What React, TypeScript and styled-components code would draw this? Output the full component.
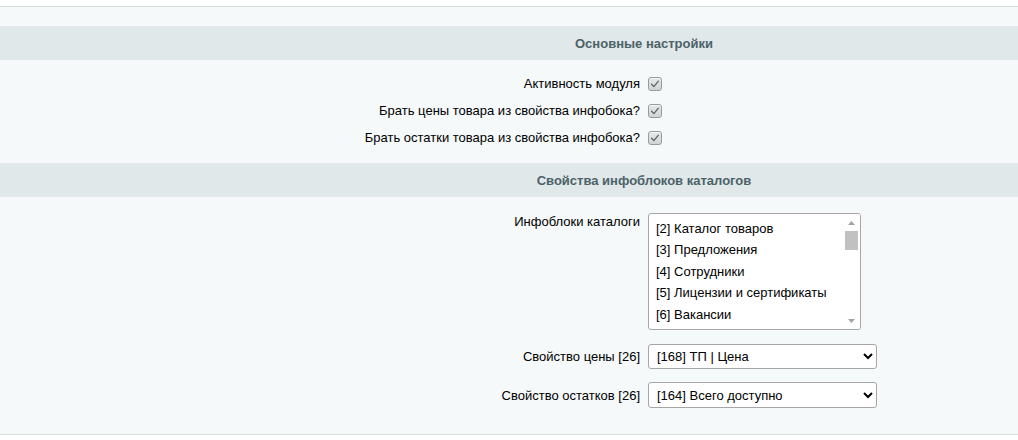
import React from "react";
import styled, { createGlobalStyle } from "styled-components";

const GlobalStyle = createGlobalStyle`
  html, body {
    margin: 0;
    padding: 0;
    background: #ffffff;
    overflow: hidden;
  }
  body {
    font-family: "Liberation Sans", Arial, Helvetica, sans-serif;
    font-size: 13px;
    color: #000000;
  }
`;

const Page = styled.div`
  width: 100%;
  padding-top: 6px;
  background: #ffffff;
`;

const Panel = styled.div`
  background: #f5f9f9;
  border-top: 1px solid #d7dcdd;
  border-bottom: 1px solid #d7dcdd;
  padding-top: 19px;
  padding-bottom: 26px;
`;

const Heading = styled.div`
  height: 34px;
  padding-left: 270px;
  background: #e0e8ea;
  color: #4b6267;
  font-weight: bold;
  font-size: 13px;
  display: flex;
  align-items: center;
  justify-content: center;
`;

const Body = styled.div<{ $top: number; $bottom: number; $gap: number }>`
  display: flex;
  flex-direction: column;
  padding-top: ${(p) => p.$top}px;
  padding-bottom: ${(p) => p.$bottom}px;
  gap: ${(p) => p.$gap}px;
`;

const Row = styled.div<{ $h?: number; $top?: boolean; $mt?: number }>`
  display: grid;
  grid-template-columns: 648px 1fr;
  align-items: ${(p) => (p.$top ? "start" : "center")};
  ${(p) => (p.$h ? `height: ${p.$h}px;` : "")}
  ${(p) => (p.$mt ? `margin-top: ${p.$mt}px;` : "")}
`;

const Label = styled.label<{ $pt?: number }>`
  text-align: right;
  padding-right: 8px;
  padding-top: ${(p) => p.$pt ?? 0}px;
  color: #000;
  font-size: 13px;
  white-space: nowrap;
`;

const Field = styled.div`
  display: flex;
  align-items: center;
`;

const CheckBox = styled.span`
  width: 14px;
  height: 14px;
  box-sizing: border-box;
  border: 1px solid #979b9c;
  border-radius: 3px;
  background: linear-gradient(#e6e8e8, #d1d4d5);
  box-shadow: inset 0 1px 0 rgba(255, 255, 255, 0.7);
  display: inline-flex;
  align-items: center;
  justify-content: center;
`;

const ListBox = styled.div`
  width: 213px;
  height: 117px;
  box-sizing: border-box;
  border: 1px solid #a6a6a6;
  border-radius: 3px;
  background: #ffffff;
  display: flex;
  overflow: hidden;
`;

const Options = styled.div`
  flex: 1;
  padding: 3.5px 0 0 7px;
  display: flex;
  flex-direction: column;
  overflow: hidden;
`;

const Option = styled.div`
  height: 21.5px;
  line-height: 21.5px;
  white-space: nowrap;
  font-size: 13px;
  color: #000;
`;

const ScrollBar = styled.div`
  width: 17px;
  display: flex;
  flex-direction: column;
  background: #ffffff;
`;

const ScrollArrow = styled.div`
  height: 17px;
  display: flex;
  align-items: center;
  justify-content: center;
`;

const ScrollTrack = styled.div`
  flex: 1;
  padding: 0 2px;
`;

const ScrollThumb = styled.div`
  height: 19px;
  background: #c1c1c1;
`;

const Select = styled.select<{ $h: number }>`
  width: 229px;
  height: ${(p) => p.$h}px;
  box-sizing: border-box;
  padding: 0 4px 0 4px;
  border: 1px solid #a6a6a6;
  border-radius: 3px;
  background: #ffffff;
  font-family: "Liberation Sans", Arial, sans-serif;
  font-size: 13px;
  color: #000;
  outline: none;
`;

const Check = () => (
  <CheckBox>
    <svg width="10" height="10" viewBox="0 0 10 10">
      <path
        d="M1.6 5.2 L3.9 7.6 L8.4 2.2"
        fill="none"
        stroke="#5f6364"
        strokeWidth="1.3"
        strokeLinecap="round"
        strokeLinejoin="round"
      />
    </svg>
  </CheckBox>
);

const Arrow = ({ down }: { down?: boolean }) => (
  <svg width="7" height="4" viewBox="0 0 7 4">
    <path d={down ? "M0 0 H7 L3.5 4 Z" : "M0 4 H7 L3.5 0 Z"} fill="#a3a3a3" />
  </svg>
);

const checkRows = [
  "Активность модуля",
  "Брать цены товара из свойства инфобока?",
  "Брать остатки товара из свойства инфобока?",
];

const iblocks = [
  "[2] Каталог товаров",
  "[3] Предложения",
  "[4] Сотрудники",
  "[5] Лицензии и сертификаты",
  "[6] Вакансии",
];

export default function App() {
  return (
    <>
      <GlobalStyle />
      <Page>
        <Panel>
          <Heading>Основные настройки</Heading>
          <Body $top={10} $bottom={12} $gap={0}>
            {checkRows.map((t) => (
              <Row key={t} $h={27}>
                <Label>{t}</Label>
                <Field>
                  <Check />
                </Field>
              </Row>
            ))}
          </Body>
          <Heading>Свойства инфоблоков каталогов</Heading>
          <Body $top={16} $bottom={0} $gap={13}>
            <Row $top>
              <Label $pt={1}>Инфоблоки каталоги</Label>
              <Field>
                <ListBox role="listbox" aria-multiselectable="true">
                  <Options>
                    {iblocks.map((o) => (
                      <Option key={o} role="option">
                        {o}
                      </Option>
                    ))}
                  </Options>
                  <ScrollBar>
                    <ScrollArrow>
                      <Arrow />
                    </ScrollArrow>
                    <ScrollTrack>
                      <ScrollThumb />
                    </ScrollTrack>
                    <ScrollArrow>
                      <Arrow down />
                    </ScrollArrow>
                  </ScrollBar>
                </ListBox>
              </Field>
            </Row>
            <Row $mt={1}>
              <Label>Свойство цены [26]</Label>
              <Field>
                <Select $h={25} defaultValue="168">
                  <option value="168">[168] ТП | Цена</option>
                </Select>
              </Field>
            </Row>
            <Row>
              <Label>Свойство остатков [26]</Label>
              <Field>
                <Select $h={26} defaultValue="164">
                  <option value="164">[164] Всего доступно</option>
                </Select>
              </Field>
            </Row>
          </Body>
        </Panel>
      </Page>
    </>
  );
}
